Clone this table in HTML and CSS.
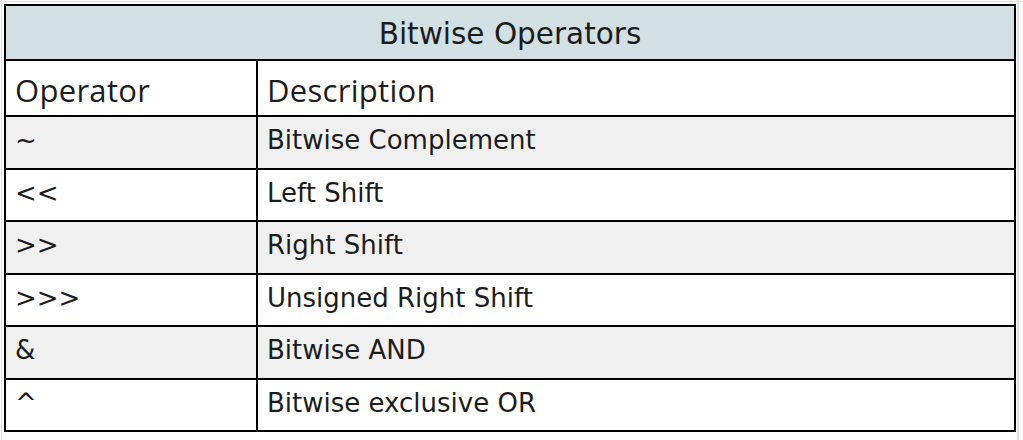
FILE: index.html
```html
<!DOCTYPE html>
<html>
<head>
<meta charset="utf-8">
<link rel="stylesheet" href="styles.css">
</head>
<body>
<div class="sheet">
  <table class="ops">
    <colgroup><col class="c1"><col class="c2"></colgroup>
    <thead>
      <tr class="title"><th colspan="2">Bitwise Operators</th></tr>
      <tr class="heads"><th>Operator</th><th>Description</th></tr>
    </thead>
    <tbody>
      <tr class="alt"><td>~</td><td>Bitwise Complement</td></tr>
      <tr><td>&lt;&lt;</td><td>Left Shift</td></tr>
      <tr class="alt"><td>&gt;&gt;</td><td>Right Shift</td></tr>
      <tr><td>&gt;&gt;&gt;</td><td>Unsigned Right Shift</td></tr>
      <tr class="alt"><td>&amp;</td><td>Bitwise AND</td></tr>
      <tr><td>^</td><td>Bitwise exclusive OR</td></tr>
    </tbody>
  </table>
</div>
</body>
</html>
```
FILE: styles.css
```css
html, body {
  margin: 0;
  padding: 0;
  background: #ffffff;
}
.sheet {
  width: 1023px;
  height: 440px;
  padding: 4px 0 0 4px;
  box-sizing: border-box;
  background-color: #fff;
  background-image:
    linear-gradient(to right, transparent 0, transparent 1px, #dedede 1px, #dedede 2px, transparent 2px),
    linear-gradient(to right, transparent 0, transparent 1017px, #dedede 1017px, #dedede 1019px, transparent 1019px),
    linear-gradient(to bottom, transparent 0, transparent 1px, #dedede 1px, #dedede 2px, transparent 2px);
}
.ops {
  border-collapse: collapse;
  width: 1012px;
  font-family: "DejaVu Sans", "Open Sans", sans-serif;
  color: #1c1c1c;
}
.ops .c1 { width: 252px; }
.ops th, .ops td {
  border: 2px solid #000;
  text-align: left;
  font-weight: normal;
}
.title th {
  background: #d2dfe3;
  text-align: center;
  font-size: 29.5px;
  height: 50px;
  padding: 3px 0 0;
}
.heads th {
  background: #fff;
  font-family: "Open Sans", "DejaVu Sans", sans-serif;
  font-size: 31px;
  letter-spacing: 0.3px;
  height: 50px;
  padding: 4px 9px 0;
}
.ops td {
  font-size: 26px;
  height: 46.5px;
  padding: 0 9px 4px;
  vertical-align: middle;
}
.alt td { background: #f0f0f0; }
```
